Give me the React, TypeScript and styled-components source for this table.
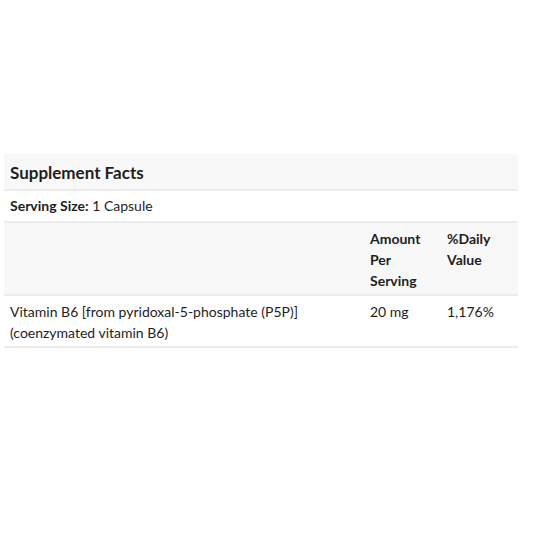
import React from "react";
import styled, { createGlobalStyle } from "styled-components";

const Global = createGlobalStyle`
  html, body { margin: 0; padding: 0; background: #fff; }
  body { font-family: Lato, "Open Sans", sans-serif; color: #1e1e1e; }
`;

const Page = styled.div`
  padding: 154px 20px 0 4px;
`;

const Table = styled.table`
  width: 514px;
  border-collapse: collapse;
  font-size: 14px;
  line-height: 21px;
`;

const TitleCell = styled.th`
  background: #f8f8f8;
  text-align: left;
  font-size: 17px;
  font-weight: 700;
  height: 34px;
  padding: 1px 6px 0;
  border-bottom: 2px solid #ececec;
`;

const Row = styled.tr<{ $shade?: boolean }>`
  background: ${(p) => (p.$shade ? "#f8f8f8" : "#fff")};
  border-bottom: 2px solid #ececec;
`;

const Cell = styled.td<{ $w?: number; $bold?: boolean }>`
  vertical-align: top;
  padding: 5px 6px 3px;
  width: ${(p) => (p.$w ? `${p.$w - 12}px` : "auto")};
  font-weight: ${(p) => (p.$bold ? 700 : 400)};
`;

const ServingCell = styled.td`
  padding: 4px 6px 5px;
`;

const Label = styled.strong`
  font-weight: 700;
`;

export default function App() {
  return (
    <>
      <Global />
      <Page>
        <Table>
          <thead>
            <tr>
              <TitleCell colSpan={3}>Supplement Facts</TitleCell>
            </tr>
          </thead>
          <tbody>
            <Row>
              <ServingCell colSpan={3}>
                <Label>Serving Size:</Label> 1 Capsule
              </ServingCell>
            </Row>
            <Row $shade>
              <Cell $w={360}></Cell>
              <Cell $w={77} $bold>
                Amount
                <br />
                Per
                <br />
                Serving
              </Cell>
              <Cell $w={77} $bold>
                %Daily
                <br />
                Value
              </Cell>
            </Row>
            <Row>
              <Cell>
                Vitamin B6 [from pyridoxal-5-phosphate (P5P)]
                <br />
                (coenzymated vitamin B6)
              </Cell>
              <Cell>20 mg</Cell>
              <Cell>1,176%</Cell>
            </Row>
          </tbody>
        </Table>
      </Page>
    </>
  );
}
